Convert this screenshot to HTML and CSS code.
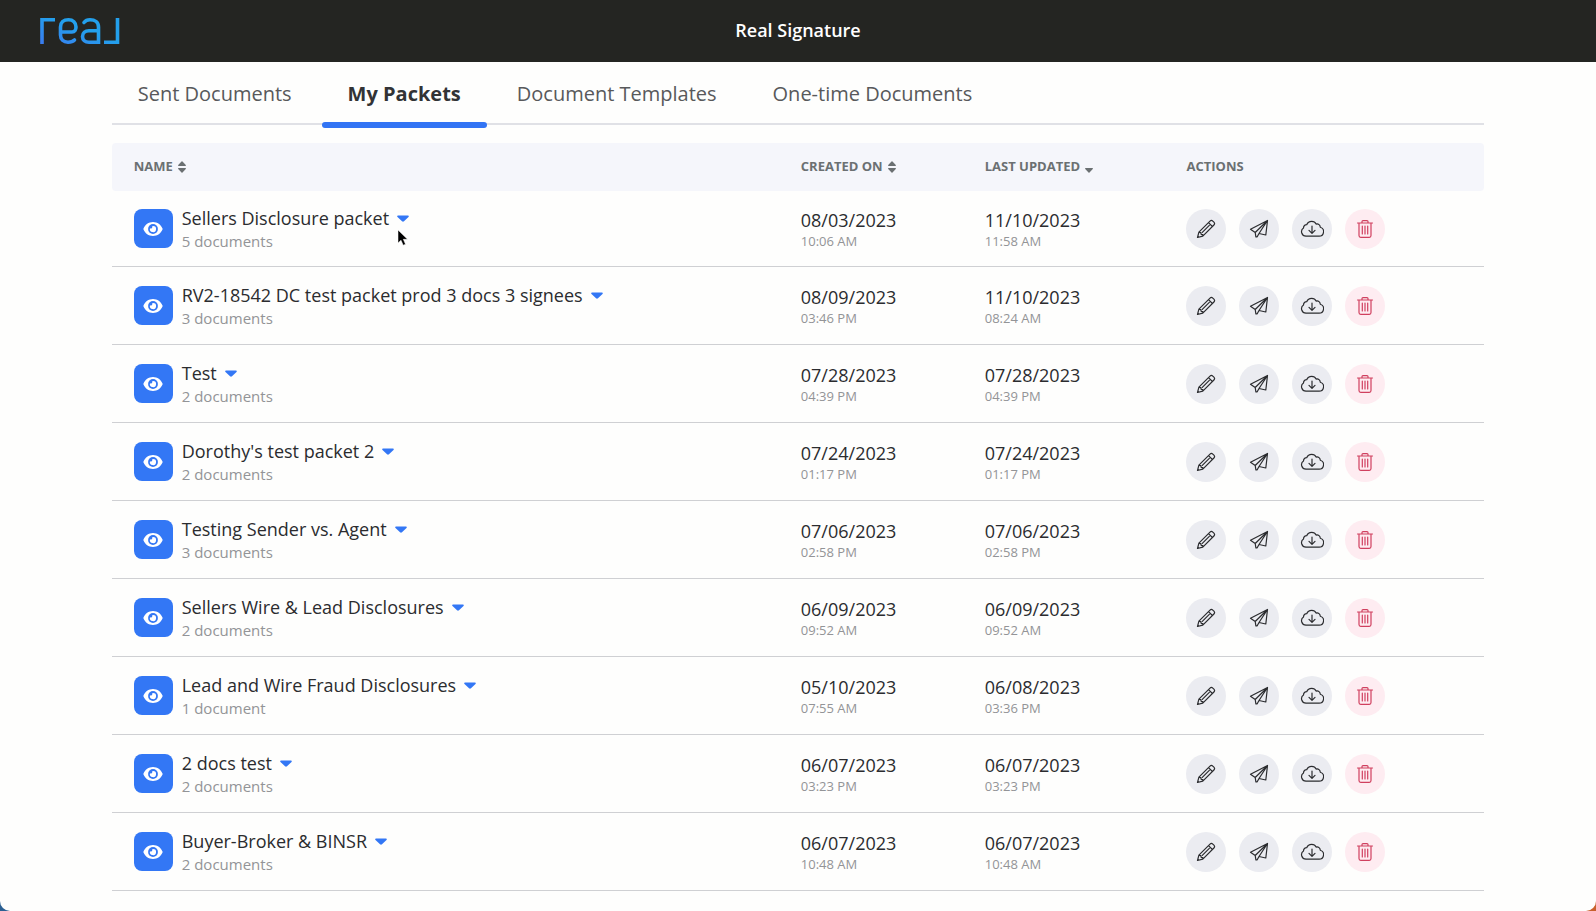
FILE: index.html
```
<!DOCTYPE html>
<html lang="en">
<head>
<meta charset="UTF-8">
<meta name="viewport" content="width=device-width, initial-scale=1.0">
<title>Real Signature</title>
<link rel="stylesheet" href="styles.css">
</head>
<body>
<svg class="sprite" aria-hidden="true">
  <symbol id="eye" viewBox="0 0 20 16">
    <path fill="#fff" d="M10 1C5.600 1 2 3.800.5 7.500a1.300 1.300 0 0 0 0 1C2 12.200 5.600 15 10 15s8-2.800 9.500-6.500a1.300 1.300 0 0 0 0-1C18 3.800 14.400 1 10 1z"/>
    <circle cx="10" cy="8" r="4.900" fill="#3377f5"/>
    <path fill="#fff" d="M10 4.900a3.100 3.100 0 1 1-3 2.300 1.700 1.700 0 0 0 2.300-2.200z"/>
  </symbol>
  <symbol id="caret" viewBox="0 0 12 7">
    <path fill="currentColor" d="M1.200.5h9.600c.9 0 1.300 1 .7 1.600L7 6.300a1.500 1.500 0 0 1-2 0L.5 2.100C-.1 1.500.3.5 1.200.5z"/>
  </symbol>
  <symbol id="sort" viewBox="0 0 8 12">
    <path fill="currentColor" d="M.7 5h6.600c.6 0 .9-.7.500-1.100L4.500.6a.7.7 0 0 0-1 0L.2 3.900C-.2 4.300.100 5 .7 5zM.7 7h6.600c.6 0 .9.7.5 1.100l-3.300 3.300a.7.7 0 0 1-1 0L.2 8.100C-.2 7.700.1 7 .7 7z"/>
  </symbol>
  <symbol id="sort-down" viewBox="0 0 8 12">
    <path fill="currentColor" d="M.7 7h6.600c.6 0 .9.7.5 1.100l-3.300 3.300a.7.7 0 0 1-1 0L.2 8.100C-.2 7.700.1 7 .7 7z"/>
  </symbol>
  <symbol id="pencil" viewBox="0 0 20 20">
    <path d="M1.500 18.500l1.400-5.300L14 2.100a2 2 0 0 1 2.800 0l1.100 1.100a2 2 0 0 1 0 2.800L6.800 17.100zM2.900 13.200l1.900.4.400 1.700 1.600.3V17M12.500 3.600l3.900 3.900M6.300 13.400l7-7M1.800 17.200l1 1"/>
  </symbol>
  <symbol id="plane" viewBox="0 0 20 20">
    <path d="M18.500 1.500L1.500 10.300l4.700 3.200zM18.500 1.500L16.800 16l-6.800-1.500zM6.200 13.500l.7 4.300h1.300L10 14.500"/>
  </symbol>
  <symbol id="cloud" viewBox="0 0 24 20">
    <path d="M6 17.200a4.500 4.500 0 0 1-2.500-8.200C3.500 6.900 5 5.600 6.700 5.700 7.600 3.500 9.500 2.300 11.700 2.300c2 0 3.600 1 4.400 2.800 2.300-.6 4.100 1 4.200 3.100a4.600 4.600 0 0 1-1.500 9zM12 7v7M9 11.300l3 3 3-3"/>
  </symbol>
  <symbol id="trash" viewBox="0 0 18 20">
    <path d="M1.500 4h15M6 4V2.600c0-.6.4-1 1-1h4c.6 0 1 .4 1 1V4M3 4v12.500c0 1 .7 1.800 1.700 1.800h8.600c1 0 1.700-.8 1.700-1.800V4M6.300 7v8M9 7v8M11.700 7v8"/>
  </symbol>
</svg>

<header class="topbar">
  <a class="logo" href="#" aria-label="real">
    <svg width="80" height="28" viewBox="0 0 80 28" fill="none" stroke="url(#logo-blue)" stroke-width="3.600">
      <defs>
        <linearGradient id="logo-blue" gradientUnits="userSpaceOnUse" x1="0" y1="27" x2="10" y2="0">
          <stop offset="0" stop-color="#3b7bf0"/>
          <stop offset="1" stop-color="#23a0ec"/>
        </linearGradient>
      </defs>
      <path d="M2 27V2.800H15"/>
      <path stroke-linecap="round" d="M21 15H32C34.800 15 36 12.500 36 10 36 5.500 33 2.800 28.500 2.800 23.500 2.800 20.500 5.500 20.500 10V18C20.500 22.500 23.500 25.200 28 25.200 31 25.200 33 24.500 34.500 23"/>
      <path stroke-linecap="round" d="M44 5.500C45.500 3.500 47.500 2.800 50 2.800 55 2.800 58.500 5.500 58.500 10V25.200H49C45 25.200 42.500 23 42.500 19.500 42.500 16 45 13.800 49 13.800H58"/>
      <path d="M77.500 1V25.200H64"/>
    </svg>
  </a>
  <h1 class="title">Real Signature</h1>
</header>

<main class="content">
  <nav class="tabs">
    <a class="tab" href="#">Sent Documents</a>
    <a class="tab active" href="#">My Packets</a>
    <a class="tab" href="#">Document Templates</a>
    <a class="tab" href="#">One-time Documents</a>
  </nav>

  <table class="packets">
    <thead>
      <tr>
        <th class="col-name">NAME <svg class="sort-icon"><use href="#sort"/></svg></th>
        <th class="col-created">CREATED ON <svg class="sort-icon"><use href="#sort"/></svg></th>
        <th class="col-updated">LAST UPDATED <svg class="sort-icon"><use href="#sort-down"/></svg></th>
        <th class="col-actions">ACTIONS</th>
      </tr>
    </thead>
    <tbody id="rows"></tbody>
  </table>
</main>

<svg class="pointer" viewBox="0 0 12 18" aria-hidden="true">
  <path d="M1 1v13l3-2.800 2.200 5 2.300-1-2.200-4.900h4.200z" fill="#000" stroke="#fff" stroke-width=".5"/>
</svg>

<script src="script.js"></script>
</body>
</html>
```
FILE: styles.css
```
* {
  box-sizing: border-box;
}
html {
  background: linear-gradient(to right, #2b5f92 50%, #c8602c 50%);
}
body {
  min-height: 100vh;
  margin: 0;
  overflow: hidden;
  background: #fefefd;
  border-radius: 0 0 10px 10px;
  color: #2b2c2f;
  font-family: "Open Sans", "Noto Sans", sans-serif;
}
button {
  padding: 0;
  border: 0;
  cursor: pointer;
}
.sprite {
  display: none;
}
.topbar {
  display: grid;
  grid-template-columns: 1fr auto 1fr;
  align-items: center;
  height: 62px;
  padding: 0 40px;
  background: #242522;
}
.logo {
  display: flex;
}
.title {
  margin: 0;
  padding-bottom: 2px;
  color: #fff;
  font-size: 18px;
  font-weight: 600;
}
.content {
  padding: 0 7%;
}
.tabs {
  display: flex;
  gap: 4px;
  height: 63px;
  margin-bottom: 18px;
  border-bottom: 2px solid #e0e1e6;
}
.tab {
  position: relative;
  padding: 0 26px;
  color: #58595b;
  font-size: 20px;
  line-height: 64px;
  text-decoration: none;
}
.tab.active {
  color: #323335;
  font-weight: 700;
}
.tab.active::after {
  content: "";
  position: absolute;
  right: 0;
  bottom: -5px;
  left: 0;
  height: 6px;
  border-radius: 3px;
  background: #3274f4;
}
.packets {
  width: 100%;
  border-spacing: 0;
  table-layout: fixed;
}
.packets th {
  height: 48px;
  padding: 0 22px 2px;
  background: #f5f6fb;
  color: #6b7072;
  font-size: 13px;
  font-weight: 700;
  text-align: left;
}
.packets th:first-child {
  border-radius: 4px 0 0 4px;
}
.packets th:last-child {
  border-radius: 0 4px 4px 0;
}
.col-name {
  width: 48.6%;
}
.col-created {
  width: 13.4%;
}
.col-updated {
  width: 14.7%;
}
.sort-icon {
  width: 8px;
  height: 12px;
  margin-left: 2px;
  vertical-align: -2px;
}
.packets td {
  height: 78px;
  padding: 0 22px;
  border-bottom: 1px solid #cfd0d3;
}
.packets tr:first-child td {
  height: 76px;
}
.packet {
  display: flex;
  align-items: center;
  gap: 9px;
}
.view {
  display: flex;
  align-items: center;
  justify-content: center;
  width: 39px;
  height: 39px;
  border-radius: 8px;
  background: #3377f5;
}
.view svg {
  width: 20px;
  height: 16px;
}
.name {
  display: flex;
  align-items: center;
  gap: 8px;
  font-size: 18px;
  line-height: 24px;
}
.toggle {
  display: flex;
  padding-top: 2px;
  background: none;
  color: #3377f5;
}
.toggle svg {
  width: 12px;
  height: 7px;
}
.count {
  color: #939497;
  font-size: 15px;
  line-height: 22px;
}
.date {
  padding-top: 2px;
  font-size: 18px;
  line-height: 22px;
}
.time {
  color: #939497;
  font-size: 13px;
  line-height: 20px;
}
.actions {
  display: flex;
  gap: 13px;
}
.action {
  display: flex;
  align-items: center;
  justify-content: center;
  width: 40px;
  height: 40px;
  border-radius: 50%;
  background: #ebecf1;
  color: #2b2c2f;
}
.action svg {
  width: 20px;
  height: 20px;
  fill: none;
  stroke: currentColor;
  stroke-width: 1.2;
  stroke-linecap: round;
  stroke-linejoin: round;
}
.action .wide {
  width: 24px;
}
.action.delete {
  background: #feecf1;
  color: #d0405f;
}
.pointer {
  position: absolute;
  top: 229px;
  left: 397px;
  width: 12px;
  height: 18px;
}
```
FILE: script.js
```
const packets = [
  ['Sellers Disclosure packet', '5 documents', '08/03/2023', '10:06 AM', '11/10/2023', '11:58 AM'],
  ['RV2-18542 DC test packet prod 3 docs 3 signees', '3 documents', '08/09/2023', '03:46 PM', '11/10/2023', '08:24 AM'],
  ['Test', '2 documents', '07/28/2023', '04:39 PM', '07/28/2023', '04:39 PM'],
  ["Dorothy's test packet 2", '2 documents', '07/24/2023', '01:17 PM', '07/24/2023', '01:17 PM'],
  ['Testing Sender vs. Agent', '3 documents', '07/06/2023', '02:58 PM', '07/06/2023', '02:58 PM'],
  ['Sellers Wire &amp; Lead Disclosures', '2 documents', '06/09/2023', '09:52 AM', '06/09/2023', '09:52 AM'],
  ['Lead and Wire Fraud Disclosures', '1 document', '05/10/2023', '07:55 AM', '06/08/2023', '03:36 PM'],
  ['2 docs test', '2 documents', '06/07/2023', '03:23 PM', '06/07/2023', '03:23 PM'],
  ['Buyer-Broker &amp; BINSR', '2 documents', '06/07/2023', '10:48 AM', '06/07/2023', '10:48 AM']
];

document.getElementById('rows').innerHTML = packets.map(([name, count, created, createdTime, updated, updatedTime]) => `
  <tr>
    <td>
      <div class="packet">
        <button class="view" aria-label="View"><svg><use href="#eye"/></svg></button>
        <div>
          <div class="name">${name} <button class="toggle" aria-label="Show documents"><svg><use href="#caret"/></svg></button></div>
          <div class="count">${count}</div>
        </div>
      </div>
    </td>
    <td>
      <div class="date">${created}</div>
      <div class="time">${createdTime}</div>
    </td>
    <td>
      <div class="date">${updated}</div>
      <div class="time">${updatedTime}</div>
    </td>
    <td>
      <div class="actions">
        <button class="action" aria-label="Edit"><svg><use href="#pencil"/></svg></button>
        <button class="action" aria-label="Send"><svg><use href="#plane"/></svg></button>
        <button class="action" aria-label="Download"><svg class="wide"><use href="#cloud"/></svg></button>
        <button class="action delete" aria-label="Delete"><svg><use href="#trash"/></svg></button>
      </div>
    </td>
  </tr>`).join('');
```
